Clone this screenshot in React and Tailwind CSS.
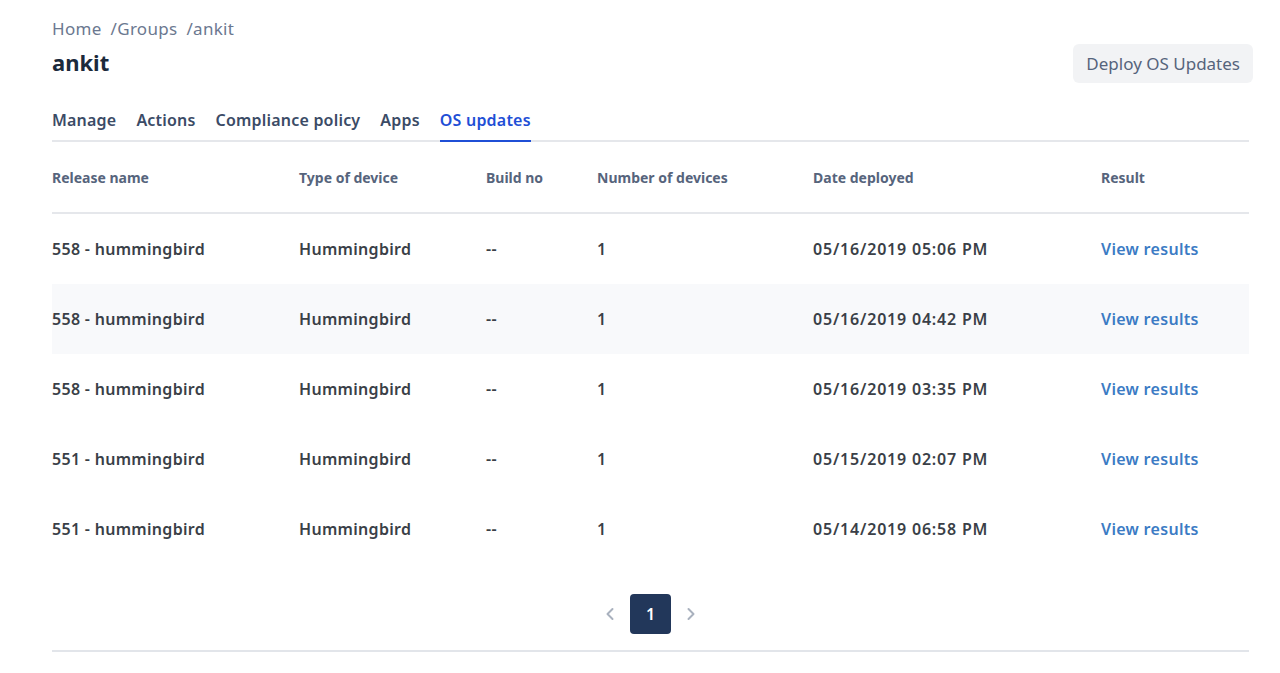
import React from 'react';

const rows = [
  { name: '558 - hummingbird', date: '05/16/2019 05:06 PM' },
  { name: '558 - hummingbird', date: '05/16/2019 04:42 PM', shaded: true },
  { name: '558 - hummingbird', date: '05/16/2019 03:35 PM' },
  { name: '551 - hummingbird', date: '05/15/2019 02:07 PM' },
  { name: '551 - hummingbird', date: '05/14/2019 06:58 PM' },
];

const tabs = ['Manage', 'Actions', 'Compliance policy', 'Apps', 'OS updates'];

export default function App() {
  return (
    <div className="min-h-[673px] bg-white pl-[52px] pr-[31px] pt-[16px]" style={{ fontFamily: '"Noto Sans", "Open Sans", sans-serif' }}>
      {/* Header */}
      <div className="flex items-start justify-between">
        <div>
          <div className="flex gap-[9px] text-[17px] leading-[26px] tracking-[0.3px] text-[#6b7890]">
            <span>Home</span>
            <span>/Groups</span>
            <span>/ankit</span>
          </div>
          <h1 className="mt-[5px] text-[22px] font-bold leading-[30px] text-[#1b2a3b]">ankit</h1>
        </div>
        <button className="mt-[28px] mr-[-4px] h-[39px] rounded-md bg-[#f2f3f5] px-[13px] text-[17px] text-[#56647c]">
          Deploy OS Updates
        </button>
      </div>

      {/* Tabs */}
      <div className="mt-[25px] flex gap-[20px] border-b-2 border-[#e5e7eb]">
        {tabs.map(t => (
          <div
            key={t}
            className={`-mb-[2px] pb-[8px] text-[16px] font-semibold leading-[24px] tracking-[0.2px] ${
              t === 'OS updates' ? 'border-b-2 border-[#1f4fd6] text-[#1f4fd6]' : 'text-[#3b4b66]'
            }`}
          >
            {t}
          </div>
        ))}
      </div>

      {/* Table */}
      <div className="grid h-[72px] grid-cols-[247px_187px_111px_216px_288px_1fr] items-center border-b-2 border-[#e5e7eb] text-[14px] font-bold text-[#56647c]">
        <div>Release name</div>
        <div>Type of device</div>
        <div>Build no</div>
        <div>Number of devices</div>
        <div>Date deployed</div>
        <div>Result</div>
      </div>
      {rows.map((r, i) => (
        <div
          key={i}
          className={`grid h-[70px] grid-cols-[247px_187px_111px_216px_288px_1fr] items-center text-[16px] font-semibold tracking-[0.3px] text-[#3a3f47] ${
            r.shaded ? 'bg-[#f8f9fb]' : ''
          }`}
        >
          <div>{r.name}</div>
          <div>Hummingbird</div>
          <div>--</div>
          <div>1</div>
          <div className="tracking-[0.8px]">{r.date}</div>
          <div className="text-[#3b7bc4]">View results</div>
        </div>
      ))}

      {/* Pagination */}
      <div className="mt-[30px] flex items-center justify-center gap-[10px]">
        <svg width="20" height="20" viewBox="0 0 20 20" fill="none" stroke="#a9b1be" strokeWidth="2" strokeLinecap="round" strokeLinejoin="round">
          <path d="M12.5 5l-5 5 5 5" />
        </svg>
        <div className="flex h-[40px] w-[41px] items-center justify-center rounded-[4px] bg-[#22375a] text-[16px] font-semibold text-white">1</div>
        <svg width="20" height="20" viewBox="0 0 20 20" fill="none" stroke="#a9b1be" strokeWidth="2" strokeLinecap="round" strokeLinejoin="round">
          <path d="M7.5 5l5 5-5 5" />
        </svg>
      </div>
      <div className="mt-[16px] h-[2px] bg-[#e2e5ea]" />
    </div>
  );
}
